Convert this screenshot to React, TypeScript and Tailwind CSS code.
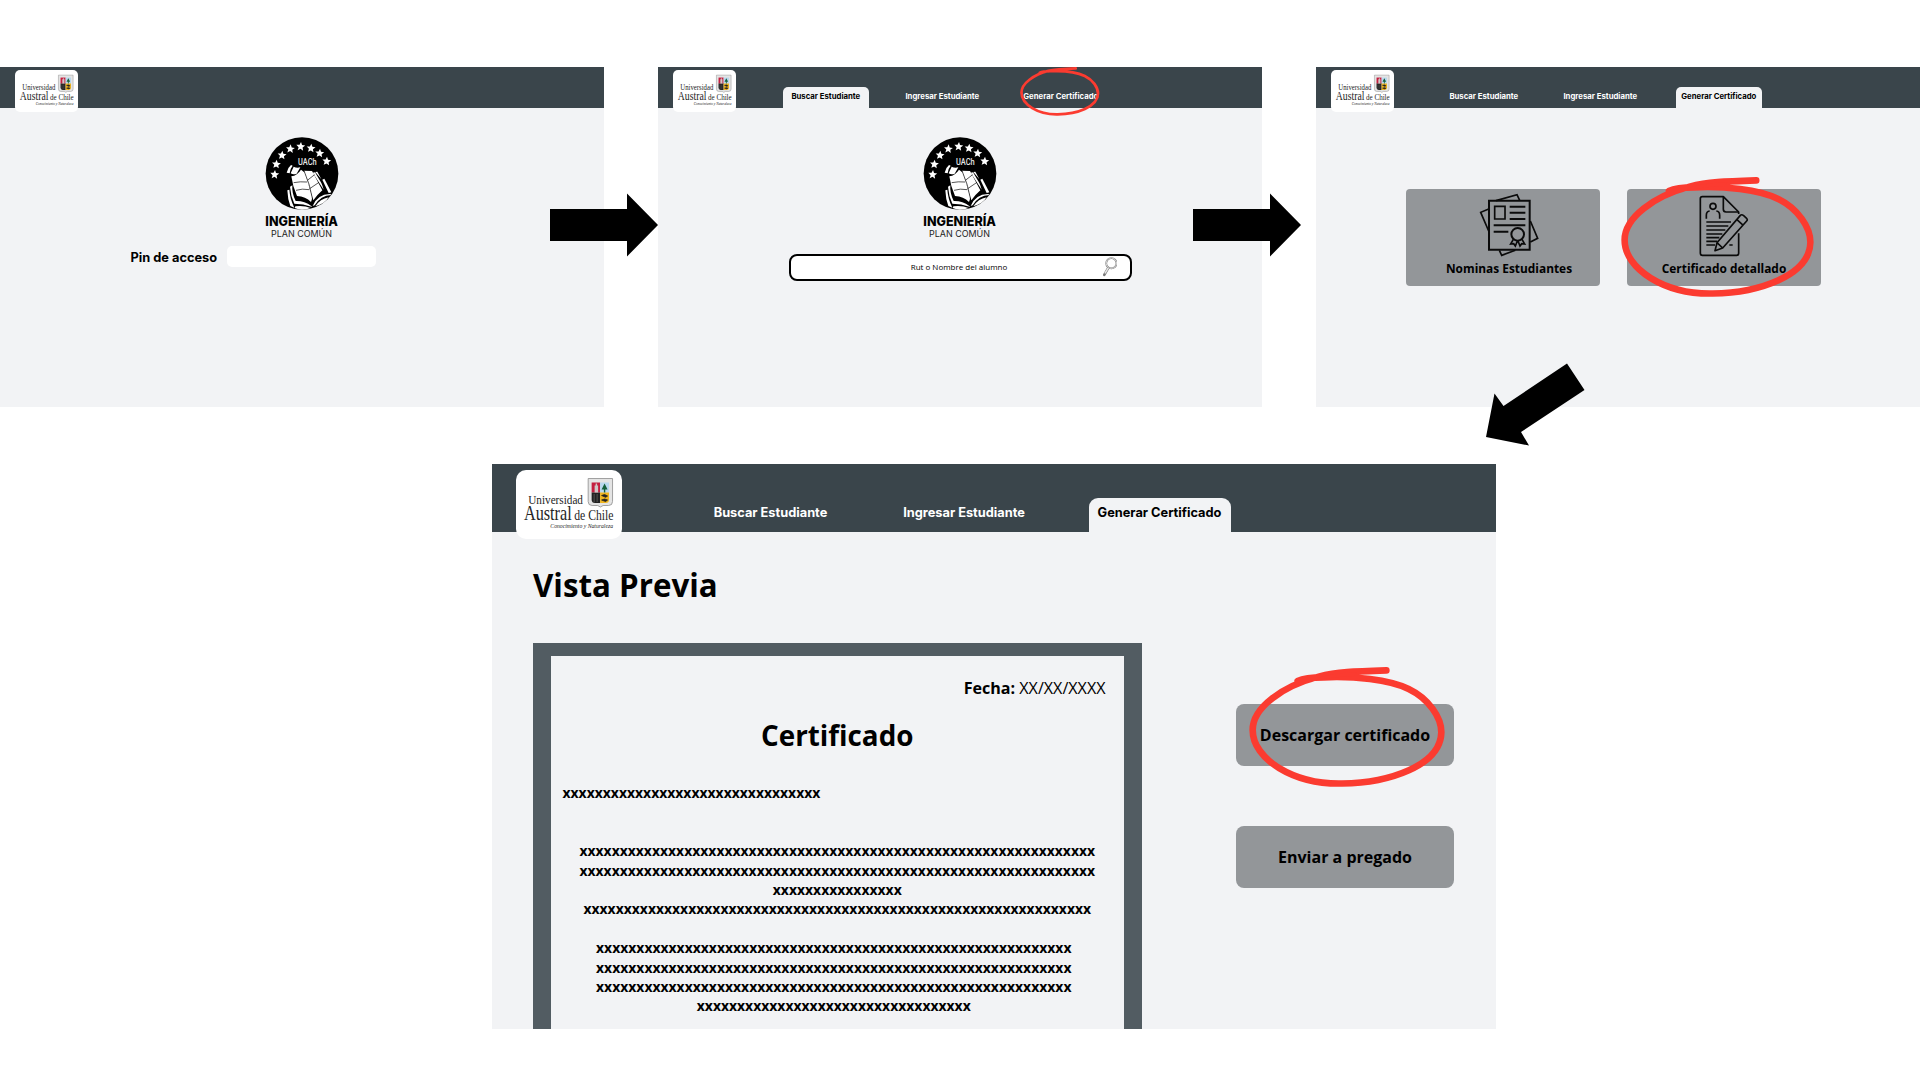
const nav = ["Buscar Estudiante", "Ingresar Estudiante", "Generar Certificado"];

function UniversityLogo({ large = false }: { large?: boolean }) {
  return (
    <div
      className={
        large
          ? "absolute left-[24px] top-[5.500px] h-[69.500px] w-[105.500px] rounded-[10px] bg-white"
          : "absolute left-[14.500px] top-[3px] h-[42px] w-[63.500px] rounded-[5px] bg-white"
      }
    >
      <svg viewBox="0 0 106 69.5" preserveAspectRatio="none" className="block h-full w-full overflow-visible">
        <g fontFamily="Liberation Serif" fill="#252525">
          <text x="12.3" y="33.800" fontSize="13.5" textLength="55" lengthAdjust="spacingAndGlyphs">Universidad</text>
          <text x="8" y="50.3" fontSize="20" textLength="48" lengthAdjust="spacingAndGlyphs">Austral</text>
          <text x="58.5" y="50.3" fontSize="15" textLength="39.5" lengthAdjust="spacingAndGlyphs">de Chile</text>
          <text x="34.5" y="58.3" fontSize="6.800" fontStyle="italic" textLength="63" lengthAdjust="spacingAndGlyphs">Conocimiento y Naturaleza</text>
        </g>
        <path d="M72.5 8.5h24.5v23q0 4-4 4h-5.500l-2.700 1.500-2.700-1.500h-5.600q-4 0-4-4z" fill="#e4e4e4" stroke="#8d8d8d" strokeWidth=".8" />
        <path d="M76 12.500h8.500v10h-8.500z" fill="#c41e3f" />
        <path d="M84.500 12.500h9v10h-9z" fill="#b9d8ee" />
        <path d="M76 22.500h8.500v10.500h-5q-3.500 0-3.500-3.500z" fill="#222" />
        <path d="M84.500 22.500h9v7q0 3.500-3.500 3.500h-5.500z" fill="#efb51f" />
        <path d="M79 15.500h1v-2h1.500v2h1v7h-3.500z" fill="#cfc6c6" />
        <path d="M78.500 24v8M81.500 24v8" stroke="#777" strokeWidth=".6" />
        <path d="M89 13.500l3 6h-2.300v3h-1.400v-3h-2.300z" fill="#14603a" />
        <path d="M86 25.500l3-1 3 1.500-2 1.300zM86 30l3-1 3 1-2 1.500z" fill="#222" stroke="#222" strokeWidth=".8" />
      </svg>
    </div>
  );
}

function Header({ active, large = false, menu = true }: { active?: number; large?: boolean; menu?: boolean }) {
  return (
    <header
      className={
        large
          ? "relative flex h-[68px] items-end bg-[#3a454b] pl-[207.500px]"
          : "relative flex h-[41px] items-end bg-[#3a454b] pl-[124.800px]"
      }
    >
      <UniversityLogo large={large} />
      {menu && (
        <nav className="flex">
          {nav.map((label, i) => (
            <a
              key={label}
              className={`${
                large
                  ? "mr-[52.500px] block h-[34px] w-[142px] rounded-t-[9px] text-[12.800px] leading-[30px]"
                  : "mr-[31.500px] block h-[21px] w-[86px] rounded-t-[5px] text-[7.750px] leading-[19px]"
              } whitespace-nowrap text-center font-['Inter'] font-bold ${i === 1 ? "-indent-[2px]" : ""} ${
                i === active ? "bg-[#f2f3f5] text-black" : "text-white"
              }`}
            >
              {label}
            </a>
          ))}
        </nav>
      )}
    </header>
  );
}

function star(cx: number, cy: number, r: number) {
  return Array.from({ length: 10 }, (_, i) => {
    const a = (Math.PI / 5) * i - Math.PI / 2 + 0.08;
    const q = i % 2 ? r * 0.45 : r;
    return `${(cx + q * Math.cos(a)).toFixed(1)},${(cy + q * Math.sin(a)).toFixed(1)}`;
  }).join(" ");
}

const stars = [
  [74, 149], [79, 118], [96, 91], [121, 72], [152, 65], [183, 70], [209, 85], [230, 109],
];

function EngineeringLogo() {
  return (
    <svg viewBox="45 33 222 306" className="block h-[102px] w-[74px] overflow-visible">
      <circle cx="156" cy="145.500" r="109" fill="#000" />
      {stars.map(([x, y]) => (
        <polygon key={x} points={star(x, y, 14)} fill="#fff" />
      ))}
      <text x="144" y="119" fontFamily="Roboto" fontWeight="500" fontSize="25" fill="#e8e8e8" textLength="56" lengthAdjust="spacingAndGlyphs">UACh</text>
      <g fill="#fff">
        <path d="M110 143q3-15 13-23l5 2q-8 9-9 23z" />
        <path d="M131 125q9 5 20 2l-11 19q-10 4-18-1z" />
        <path d="M124 154q18-3 29-20l12 9 22 74q-2 10-4 14-16-16-42-18-13-28-17-59z" />
        <path d="M162 137l24 1q12 22 31 58-18 16-27 30z" />
        <path d="M188 143l7-1 19 32q5 11 7 20zM196 141l6-1 12 23z" />
        <path d="M217 164l6-3 21 41-8 2z" />
        <path d="M112 196l6-2q2 28 15 54l-12-5q-8-20-9-47z" />
        <path d="M120 185l7-4q-2 23 10 47 26-1 47 15l3 3q-28-10-54-10-11-24-13-51z" />
        <path d="M188 243q14-35 52-36 5 1 4 3-32 1-50 31z" />
        <path d="M136 244q26-3 46 5-15 6-28 5-12-1-20-5z" />
        <path d="M196 244q14-22 40-27-12 20-40 27z" />
      </g>
      <g fill="none" stroke="#000" strokeWidth="2">
        <path d="M162 137q18 40 26 87M131 173q20-4 40-2M138 196q18-6 40-2M172 166l22-17M179 191l28-19" />
      </g>
      <text x="46" y="302" fontFamily="Inter" fontWeight="800" fontSize="39.500" textLength="218" lengthAdjust="spacingAndGlyphs">INGENIERÍA</text>
      <text x="63" y="335.500" fontFamily="Inter" fontSize="28.500" fill="#222" textLength="183" lengthAdjust="spacingAndGlyphs">PLAN COMÚN</text>
    </svg>
  );
}

function Magnifier() {
  return (
    <svg viewBox="0 0 48 60" className="absolute right-[12.500px] top-[1px] h-[19.500px] w-[15.500px]" fill="none">
      <circle cx="29" cy="19" r="16" stroke="#777" strokeWidth="5.500" />
      <circle cx="29" cy="19" r="16" stroke="#e0e0e0" strokeWidth="3" />
      <path d="M19 34L7 55" stroke="#777" strokeWidth="8" strokeLinecap="round" />
      <path d="M19 34L10 49" stroke="#e8e8e8" strokeWidth="5" strokeLinecap="round" />
    </svg>
  );
}

function RedCircle({ className }: { className: string }) {
  return (
    <svg viewBox="566 561 588 362" preserveAspectRatio="none" className={`absolute ${className}`} fill="none">
      <path
        d="M712 603Q735 592 790 592C880 588 985 598 1045 627C1105 656 1143 712 1143 757C1141 858 985 909 845 911C700 914 577 838 577 750C577 682 668 618 775 590C830 576 880 574 978 571"
        stroke="#fb3b30"
        strokeWidth="20"
        strokeLinecap="round"
        strokeLinejoin="round"
      />
      <path d="M770 594Q830 577 890 577L880 589Q830 590 770 600z" fill="#fb3b30" />
    </svg>
  );
}

function RosterIcon() {
  return (
    <svg viewBox="236 66 182 192" className="h-[64px] w-[60.700px]" fill="none" stroke="#0b0b0b" strokeWidth="5">
      <path d="M287 89L350 71L358 88M265 114L241 124L265 180M390 150L412 202L390 213M297 238L304 253L345 238" />
      <path d="M266 89H388V236H266z" strokeWidth="6" />
      <path d="M283 106H314V144H283z" />
      <path d="M328 107H375M328 125H375M328 144H375M280 163H375M280 182H324" strokeWidth="6" />
      <circle cx="352" cy="190" r="19" strokeWidth="6" />
      <path d="M339 205L331 219L340 218L345 225L351 210M365 205L373 219L364 218L359 225L353 210" />
    </svg>
  );
}

function DetailIcon() {
  return (
    <svg viewBox="899 75 150 185" className="h-[61.700px] w-[50px]" fill="none" stroke="#0b0b0b" strokeWidth="5" strokeLinejoin="round">
      <path d="M1018 190V250Q1018 256 1012 256H909Q903 256 903 250V86Q903 80 909 80H972L1018 126V132" />
      <path d="M972 80V118Q972 126 980 126H1018" />
      <circle cx="941" cy="109" r="9" />
      <path d="M921 146V136Q921 124 931 123M961 146V136Q961 124 951 123M921 156H995M921 168H987M921 180H978M921 192H969M921 203H960M921 214H954M921 225H947M990 225H1000" />
      <path d="M1023 136Q1027 132 1033 137L1041 144Q1046 149 1042 153L970 234L947 242L953 218zM1012 148L1031 165M953 218L970 234" />
    </svg>
  );
}

function Arrow() {
  return (
    <svg viewBox="0 0 108 64" className="h-[64px] w-[108px]">
      <path d="M0 16H77V0.500L108 32L77 63.500V48H0z" />
    </svg>
  );
}

const certificateRows = [64, 64, 16, 63];
const closingRows = [59, 59, 59, 34];

export default function App() {
  return (
    <main className="relative h-[1080px] w-[1920px] overflow-hidden bg-white pt-[67px] font-['Open_Sans',sans-serif] text-black">
      <div className="flex gap-[54px]">
        <section className="h-[340px] w-[604px] bg-[#f2f3f5]">
          <Header menu={false} />
          <div className="flex flex-col items-center pt-[28px]">
            <EngineeringLogo />
          </div>
          <div className="mt-[8px] flex items-start pl-[130.500px]">
            <label className="w-[96.500px] whitespace-nowrap pt-px font-['Inter'] text-[12.800px] font-bold leading-[21px]">Pin de acceso</label>
            <div className="h-[21px] w-[149px] rounded-[5px] bg-white" />
          </div>
        </section>
        <section className="relative h-[340px] w-[604px] bg-[#f2f3f5]">
          <Header active={0} />
          <div className="flex flex-col items-center pt-[28px]">
            <EngineeringLogo />
            <div className="relative mt-[16px] h-[27px] w-[343px] rounded-[8px] border-2 border-black bg-white pr-[2px] text-center text-[8px] leading-[22px]">
              Rut o Nombre del alumno
              <Magnifier />
            </div>
          </div>
          <RedCircle className="left-[362px] top-0 h-[49px] w-[79.500px]" />
        </section>
        <section className="relative h-[340px] w-[604px] bg-[#f2f3f5]">
          <Header active={2} />
          <div className="flex gap-[27px] pl-[90px] pt-[80.500px]">
            <div className="flex h-[97px] w-[194px] flex-col items-center rounded-[4px] bg-[#939699] pl-[12px] pt-[4px]">
              <RosterIcon />
              <span className="whitespace-nowrap text-[11.900px] font-bold leading-[23px]">Nominas Estudiantes</span>
            </div>
            <div className="flex h-[97px] w-[194px] flex-col items-center rounded-[4px] bg-[#939699] pt-[6.500px]">
              <DetailIcon />
              <span className="whitespace-nowrap text-[11.900px] font-bold leading-[23px]">Certificado detallado</span>
            </div>
          </div>
          <RedCircle className="left-[304.500px] top-[109.500px] h-[120.500px] w-[193px]" />
        </section>
      </div>

      <section className="relative ml-[492px] mt-[57px] h-[564.500px] w-[1004px] overflow-hidden bg-[#f2f3f5]">
        <Header active={2} large />
        <h1 className="pl-[41px] pt-[33px] text-[31.300px] font-bold leading-[40px]">Vista Previa</h1>
        <div className="flex">
          <article className="ml-[40.500px] mt-[38px] h-[420px] w-[609.500px] border-x-[18px] border-t-[13px] border-[#525c62] pt-[20px]">
            <p className="pr-[18.500px] text-right text-[16.100px] leading-[24px]">
              <b>Fecha:</b> XX/XX/XXXX
            </p>
            <h2 className="mt-[17px] text-center text-[27.800px] font-bold leading-[36px]">Certificado</h2>
            <p className="mt-[30px] pl-[12px] text-[13.950px] font-bold leading-[19.400px]">{"x".repeat(32)}</p>
            <div className="mt-[38.800px] text-center text-[13.950px] font-bold leading-[19.400px]">
              {certificateRows.map((n, i) => (
                <p key={i}>{"x".repeat(n)}</p>
              ))}
            </div>
            <div className="mt-[19.400px] pr-[7px] text-center text-[13.950px] font-bold leading-[19.400px]">
              {closingRows.map((n, i) => (
                <p key={i}>{"x".repeat(n)}</p>
              ))}
            </div>
          </article>
          <div className="ml-[93.500px] mt-[98.500px] flex flex-col gap-[59.500px]">
            <button className="h-[62.500px] w-[218px] rounded-[8px] bg-[#939699] pl-px pt-px text-[16px] font-bold">Descargar certificado</button>
            <button className="h-[62.500px] w-[218px] rounded-[8px] bg-[#939699] pl-px pt-px text-[16px] font-bold">Enviar a pregado</button>
          </div>
        </div>
        <RedCircle className="left-[757px] top-[203px] h-[120.500px] w-[196px]" />
      </section>

      <div className="absolute left-[550px] top-[192.500px]"><Arrow /></div>
      <div className="absolute left-[1193px] top-[192.500px]"><Arrow /></div>
      <svg viewBox="0 0 102 86" className="absolute left-[1484px] top-[362px] h-[86px] w-[102px]">
        <path d="M83 1.500L100.500 28L37 70L45 83.500L2 75L10.500 31.500L19.500 44z" />
      </svg>
    </main>
  );
}
